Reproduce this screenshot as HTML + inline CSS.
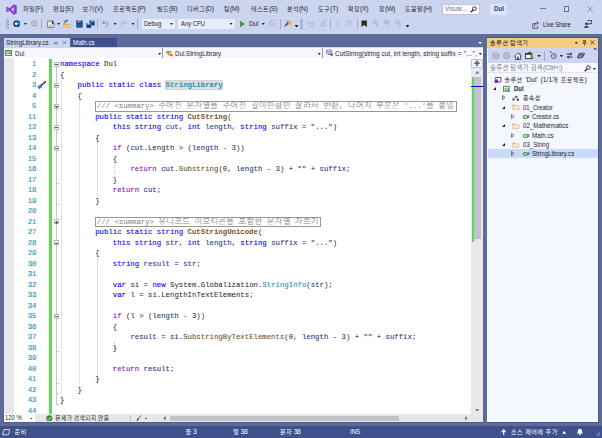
<!DOCTYPE html>
<html lang="ko">
<head>
<meta charset="utf-8">
<title>Dul - Microsoft Visual Studio</title>
<style>
*{box-sizing:border-box;margin:0;padding:0}
html,body{width:602px;height:438px;overflow:hidden;background:#5d6b99}
body{position:relative;font-family:"Liberation Sans","Noto Sans CJK KR",sans-serif;font-size:6.78px;color:#1e1e1e;-webkit-font-smoothing:antialiased;letter-spacing:-0.36px}
.a{position:absolute;white-space:nowrap}
.t{position:absolute;white-space:nowrap;line-height:10px;height:10px}
#top{left:0;top:0;width:602px;height:33.6px;background:#ccd5f0}
.menu{top:4.3px;font-size:6.89px;color:#303030}
.sep{position:absolute;width:0.8px;background:#a0abd3;top:19px;height:10px}
.dd{position:absolute;width:3.4px;height:2.2px;background:currentColor;color:#20203a;clip-path:polygon(0 0,100% 0,50% 100%)}
.grip{position:absolute;width:3px;height:9.5px;top:19px;background-image:linear-gradient(45deg,#7480ad 25%,transparent 25%,transparent 75%,#7480ad 75%),linear-gradient(45deg,#7480ad 25%,transparent 25%,transparent 75%,#7480ad 75%);background-size:2px 2px;background-position:0 0,1px 1px;opacity:.75}
.combo{position:absolute;top:19px;height:9.6px;background:#e9edfa}
/* editor */
#ed{left:3.5px;top:58px;width:479.5px;height:356px;background:#fff;overflow:hidden}
.ln{letter-spacing:0;position:absolute;left:14px;width:22.5px;text-align:right;height:10.5px;line-height:10.5px;font-family:"Liberation Mono",monospace;font-size:7.33px;color:#2b91af;-webkit-text-stroke:0.12px}
.cl{letter-spacing:0;position:absolute;left:60px;height:10.5px;line-height:10.5px;font-family:"Liberation Mono","NanumGothic",monospace;font-size:7.33px;color:#000;white-space:pre;color:#1a1a1a}
.xk,.xc,.xt,.xm,.xv,.xs{-webkit-text-stroke:0.1px}
.xk{color:#0000ff}.xc{color:#8f08c4}.xt{color:#2b91af}.xm{color:#74531f}.xv{color:#1f377f}.xs{color:#a31515}
.xb{font-weight:bold;color:#74531f;-webkit-text-stroke:0}
.xh{color:#2b91af;font-weight:bold;background:#dadfdf;box-shadow:inset 0 0 0 0.5px #c3c9c9;display:inline-block;height:10.3px;-webkit-text-stroke:0;padding:0 0.4px;margin:0 -0.4px}
.sum{letter-spacing:0;position:absolute;height:10.3px;border:0.9px solid #979797;background:#fff;font-family:"Liberation Mono","NanumGothic",monospace;font-size:7.33px;color:#808080;white-space:pre;line-height:8.3px;padding-left:0.8px;overflow:hidden}
.kc{font-family:"Liberation Mono","NanumGothic","Noto Sans CJK KR",monospace;font-size:8px;letter-spacing:0.41px}
.ko{font-size:88.5%;letter-spacing:0.46px}
.ob{position:absolute;left:53.7px;width:5px;height:5px;border:0.5px solid #bababa;background:#fff}
.ob i{position:absolute;left:0.7px;top:1.6px;width:2.6px;height:0.8px;background:#555}
.ob b{position:absolute;left:1.6px;top:0.7px;width:0.8px;height:2.6px;background:#555}
/* solution explorer */
.tr{letter-spacing:-0.25px;position:absolute;left:0;height:9.35px;line-height:9.35px;font-size:6.72px;color:#1e1e1e;white-space:nowrap}
.ex{position:absolute;width:0;height:0}
.exo{border-left:3.4px solid transparent;border-bottom:3.4px solid #222;margin-top:-0.6px}
.exc{border-top:2px solid transparent;border-bottom:2px solid transparent;border-left:2.4px solid #1e1e1e}
.sb{top:425.6px;left:0;width:602px;height:12.4px;background:#40508d}
.sbt{position:absolute;top:427.1px;height:10px;line-height:10px;color:#fff;font-size:6.89px;white-space:nowrap}
.n{letter-spacing:0!important;transform:scaleX(var(--s,.885));transform-origin:0 50%}
.cs2{letter-spacing:0.3px}
</style>
</head>
<body>
<!-- ======= title / menu / toolbar ======= -->
<div class="a" id="top"></div>
<svg class="a" style="left:5.5px;top:3.5px" width="11" height="11" viewBox="0 0 22 22"><path d="M15.6 0.6 L21.4 3 V19 L15.6 21.4 L7 13.4 L3 16.6 L0.6 15.4 V6.6 L3 5.4 L7 8.6 Z M15.8 6.6 L10.4 11 L15.8 15.4 Z M3.4 9 V13 L5.4 11 Z" fill="#8a3fd0" fill-rule="evenodd"/></svg>
<div class="t menu" style="left:23px"><span class="ko">파일</span>(F)</div>
<div class="t menu" style="left:53px"><span class="ko">편집</span>(E)</div>
<div class="t menu" style="left:82.5px"><span class="ko">보기</span>(V)</div>
<div class="t menu" style="left:113px"><span class="ko">프로젝트</span>(P)</div>
<div class="t menu" style="left:157px"><span class="ko">빌드</span>(B)</div>
<div class="t menu" style="left:187px"><span class="ko">디버그</span>(D)</div>
<div class="t menu" style="left:224px"><span class="ko">팀</span>(M)</div>
<div class="t menu" style="left:251px"><span class="ko">테스트</span>(S)</div>
<div class="t menu" style="left:287px"><span class="ko">분석</span>(N)</div>
<div class="t menu" style="left:318px"><span class="ko">도구</span>(T)</div>
<div class="t menu" style="left:348px"><span class="ko">확장</span>(X)</div>
<div class="t menu" style="left:379px"><span class="ko">창</span>(W)</div>
<div class="t menu" style="left:405px"><span class="ko">도움말</span>(H)</div>
<!-- search box -->
<div class="a" style="left:442px;top:4px;width:37.5px;height:10.5px;background:#fff;border:0.6px solid #b9c3e4"></div>
<div class="t n" style="left:445px;top:4.3px;font-size:7.01px;color:#717171">Visual...</div>
<svg class="a" style="left:469.5px;top:5.5px" width="7" height="7" viewBox="0 0 14 14"><circle cx="8.8" cy="5.2" r="3.6" fill="none" stroke="#2a2a2a" stroke-width="2"/><path d="M6.2 7.8 L1.4 12.6" stroke="#2a2a2a" stroke-width="2.8"/></svg>
<!-- solution name badge -->
<div class="a" style="left:489.5px;top:3.5px;width:17.5px;height:11.5px;background:#dfe5f7"></div>
<div class="t n" style="left:493.5px;top:4.3px;font-size:7.01px;font-weight:bold;color:#2a3f7d">Dul</div>
<!-- window buttons -->
<div class="a" style="left:540px;top:8.3px;width:5.6px;height:0.6px;background:#6a78ae"></div>
<div class="a" style="left:563.7px;top:6.2px;width:5.6px;height:5.6px;border:0.6px solid #5c6cab;background:#d5dcf3"></div>
<svg class="a" style="left:587px;top:6px" width="6.4" height="6.4" viewBox="0 0 12 12"><path d="M1 1 L11 11 M11 1 L1 11" stroke="#5c6cab" stroke-width="1.2" fill="none"/></svg>

<!-- toolbar row -->
<div class="grip" style="left:6px"></div>
<svg class="a" style="left:12.6px;top:20px" width="7.4" height="7.4" viewBox="0 0 16 16"><circle cx="8" cy="8" r="7.6" fill="#0f4a92"/><path d="M3 8 L8 3.4 V6.8 H12.8 V9.2 H8 V12.6 Z" fill="#fff"/></svg>
<div class="dd" style="left:23.8px;top:22.8px"></div>
<svg class="a" style="left:30.6px;top:20.4px" width="6.8" height="6.8" viewBox="0 0 16 16"><circle cx="8" cy="8" r="6.4" fill="#cdd1df" stroke="#9da3b7" stroke-width="2.6"/><path d="M12.4 8 L8 4 V6.6 H3.8 V9.4 H8 V12 Z" fill="#b9bece"/></svg>
<div class="sep" style="left:41px"></div>
<!-- new project -->
<svg class="a" style="left:45.5px;top:19.3px" width="9" height="9.4" viewBox="0 0 90 94"><path d="M16 22 H66 L80 36 V86 H16 Z" fill="#f6f6f8" stroke="#70758c" stroke-width="9"/><path d="M28 62 H66 M28 74 H60" stroke="#9a9fb4" stroke-width="7"/><rect x="58" y="18" width="16" height="34" fill="#3a3e55"/><circle cx="20" cy="20" r="15" fill="#e9a33c"/></svg>
<div class="dd" style="left:57px;top:22.8px"></div>
<!-- open -->
<svg class="a" style="left:63.4px;top:18.7px" width="8" height="9.3" viewBox="0 0 86 94"><path d="M4 90 V44 H34 L42 52 H80 V90 Z" fill="#d9a24c"/><path d="M4 90 L18 60 H86 L74 90 Z" fill="#efc98a"/><path d="M12 38 C10 18 22 8 38 10 V0 L54 16 L38 32 V22 C28 20 22 26 24 38 Z" fill="#1d4e97"/></svg>
<!-- save -->
<svg class="a" style="left:75.8px;top:19.8px" width="7" height="7.8" viewBox="0 0 14 16"><path d="M0.5 0.5 H11.5 L13.5 2.5 V15.5 H0.5 Z" fill="#123f7c"/><rect x="3.4" y="0.5" width="6.4" height="4.4" fill="#c9d6ee"/><rect x="6.6" y="1.2" width="2" height="3" fill="#123f7c"/><rect x="3" y="9" width="8" height="6.5" fill="#2a5aa2"/></svg>
<!-- save all -->
<svg class="a" style="left:86px;top:19.6px" width="8.8" height="8.6" viewBox="0 0 88 86"><path d="M36 2 H78 L86 10 V54 H36 Z" fill="#123f7c"/><rect x="52" y="2" width="22" height="16" fill="#c9d6ee"/><path d="M2 30 H44 L54 40 V84 H2 Z" fill="#123f7c" stroke="#ccd5f0" stroke-width="5"/><rect x="14" y="32" width="24" height="14" fill="#c9d6ee"/></svg>
<div class="sep" style="left:97.3px"></div>
<!-- undo -->
<svg class="a" style="left:102px;top:19.6px" width="7" height="8" viewBox="0 0 14 16"><path d="M2 2 V7 H7" fill="none" stroke="#7f88a8" stroke-width="1.8"/><path d="M2.6 6.4 C6 1.6 12 3 12 7.6 C12 11 9 13 6 14.6" fill="none" stroke="#7f88a8" stroke-width="1.8"/></svg>
<div class="dd" style="left:113.4px;top:22.8px"></div>
<!-- redo -->
<svg class="a" style="left:120px;top:19.6px" width="7" height="8" viewBox="0 0 14 16"><path d="M12 2 V7 H7" fill="none" stroke="#a9b1cb" stroke-width="1.6"/><path d="M11.4 6.4 C8 1.6 2 3 2 7.6 C2 11 5 13 8 14.6" fill="none" stroke="#a9b1cb" stroke-width="1.6"/></svg>
<div class="dd" style="left:131.4px;top:22.8px"></div>
<div class="sep" style="left:137.3px"></div>
<!-- combos -->
<div class="combo" style="left:141.8px;width:32.8px"></div>
<div class="t n" style="left:144.3px;top:18.8px;font-size:6.6px">Debug</div>
<div class="dd" style="left:169.8px;top:22.8px"></div>
<div class="combo" style="left:178px;width:56.8px"></div>
<div class="t n" style="left:180.5px;top:18.8px;font-size:6.6px">Any CPU</div>
<div class="dd" style="left:229.4px;top:22.8px"></div>
<!-- start -->
<svg class="a" style="left:240.2px;top:20.6px" width="4.7" height="6.1" viewBox="0 0 10 13"><path d="M0.5 0.5 L9.5 6.5 L0.5 12.5 Z" fill="#3f9f3f" stroke="#2e7d2e" stroke-width="1"/></svg>
<div class="t n" style="left:249px;top:18.8px;font-size:7.12px">Dul</div>
<div class="dd" style="left:261.6px;top:22.8px"></div>
<svg class="a" style="left:268.6px;top:20.4px" width="7" height="6.4" viewBox="0 0 14 13"><rect x="4" y="1" width="9" height="7" fill="#dfe3ef" stroke="#a9b0c8" stroke-width="1.4"/><rect x="1" y="5" width="7" height="6" fill="#c9cede" stroke="#a9b0c8" stroke-width="1.4"/></svg>
<div class="sep" style="left:279.5px"></div>
<!-- find in files -->
<svg class="a" style="left:283.6px;top:19.4px" width="8.6" height="8.4" viewBox="0 0 17 17"><path d="M4 2 H9 L10.5 4 H16 V12 H4 Z" fill="#e2a94f"/><path d="M6 6 H16 V12 H5 Z" fill="#edc27a"/><path d="M1 15.5 L2 11.5 L7.5 6 L10 8.5 L4.5 14 Z" fill="#2a63b5"/></svg>
<div class="dd" style="left:295.3px;top:26px;width:2.4px;height:1.5px;margin-left:0.1px"></div>
<div class="a" style="left:295.4px;top:24.5px;width:2.6px;height:0.8px;background:#1e1e1e"></div>
<div class="grip" style="left:300px"></div>
<!-- disabled indent icons -->
<svg class="a" style="left:307.4px;top:20.4px" width="7.6" height="7" viewBox="0 0 15 14"><path d="M2 1 V5 H5" fill="none" stroke="#a3abcb" stroke-width="1.4"/><rect x="4" y="6" width="10" height="6.5" fill="none" stroke="#a3abcb" stroke-width="1.4"/></svg>
<svg class="a" style="left:318.6px;top:20.4px" width="7.6" height="7" viewBox="0 0 15 14"><path d="M1 5 H5 V12 H1 M8 1 H14 M8 4 H14 V12.5 H8 Z" fill="none" stroke="#a3abcb" stroke-width="1.4"/></svg>
<div class="sep" style="left:329.5px"></div>
<svg class="a" style="left:334.6px;top:20.8px" width="6" height="6" viewBox="0 0 12 12"><path d="M2 2 H10 M5 6 H10 M2 10 H10" stroke="#a9b0ce" stroke-width="1.5"/></svg>
<svg class="a" style="left:345px;top:20.4px" width="7" height="7" viewBox="0 0 14 14"><path d="M1 2 H8 M4 6 H8 M1 10 H8 M11 1 V12 M9 4 L11 1 L13 4" fill="none" stroke="#a9b0ce" stroke-width="1.5"/></svg>
<div class="sep" style="left:356.5px"></div>
<!-- bookmark -->
<svg class="a" style="left:361.3px;top:19.8px" width="6.4" height="7.4" viewBox="0 0 13 15"><path d="M1 1 H12 V14 L6.5 10 L1 14 Z" fill="#2b2b2b"/></svg>
<svg class="a" style="left:372.3px;top:20.2px" width="6.4" height="7.2" viewBox="0 0 13 14"><path d="M3 1 H8 V8 L5.5 6 L3 8 Z M10 2 V12 M7 9.4 L10 12.4 L13 9.4" fill="none" stroke="#a3abcb" stroke-width="1.5"/></svg>
<svg class="a" style="left:383.3px;top:20.2px" width="7" height="7.2" viewBox="0 0 14 14"><path d="M3 1 H8 V8 L5.5 6 L3 8 Z M10.6 2 V12 M7.6 5 L10.6 2 L13.6 5" fill="none" stroke="#a3abcb" stroke-width="1.5"/></svg>
<svg class="a" style="left:394.6px;top:20.2px" width="6.6" height="7.2" viewBox="0 0 13 14"><path d="M2 1 H7 V8 L4.5 6 L2 8 Z M8 4 L12 12 M12 4 L8 12" fill="none" stroke="#a3abcb" stroke-width="1.4"/></svg>
<div class="dd" style="left:406.2px;top:26px;width:2.4px;height:1.5px;margin-left:0.1px"></div>
<div class="a" style="left:406.3px;top:24.5px;width:2.6px;height:0.8px;background:#1e1e1e"></div>
<!-- live share -->
<svg class="a" style="left:532px;top:21px" width="7.4" height="8" viewBox="0 0 74 80"><path d="M40 26 H8 V74 H58 V50" fill="none" stroke="#3a3d52" stroke-width="8"/><path d="M26 58 C26 30 40 18 62 18 M46 2 L66 18 L46 36" fill="none" stroke="#3a3d52" stroke-width="8"/></svg>
<div class="t n" style="left:543px;top:19.9px;font-size:6.55px">Live Share</div>
<svg class="a" style="left:583.8px;top:20.2px" width="8.4" height="8" viewBox="0 0 84 80"><path d="M34 6 H78 V36 H56 L46 46 V36 H40" fill="none" stroke="#2b2e44" stroke-width="9"/><circle cx="24" cy="38" r="13" fill="#2b2e44"/><path d="M2 78 C2 50 46 50 46 78 Z" fill="#2b2e44"/></svg>

<!-- ======= document well ======= -->
<div class="a" style="left:3.5px;top:38.3px;width:66.7px;height:9px;background:#ccd5f0"></div>
<div class="t n" style="left:5.6px;top:37.9px;font-size:7.01px;color:#1e1e1e">StringLibrary.cs</div>
<svg class="a" style="left:53px;top:40.6px" width="5" height="4.4" viewBox="0 0 10 9"><path d="M0 4.5 H4 M4 2 V7 M4.6 3 H9 M4.6 6 H9 M9 2.4 V6.6" stroke="#4a5070" stroke-width="1" fill="none"/></svg>
<svg class="a" style="left:62.2px;top:40.2px" width="5" height="5" viewBox="0 0 10 10"><path d="M1.4 1.4 L8.6 8.6 M8.6 1.4 L1.4 8.6" stroke="#45485c" stroke-width="1.1" fill="none"/></svg>
<div class="a" style="left:70.5px;top:38.3px;width:46px;height:8.7px;background:#40508d"></div>
<div class="t n" style="left:72.7px;top:37.9px;font-size:7.01px;color:#fff">Math.cs</div>
<div class="dd" style="left:478.2px;top:41.8px;color:#fff;width:4px;height:2.4px"></div>
<!-- nav bar -->
<div class="a" style="left:3.5px;top:47px;width:479.5px;height:11.5px;background:#f6f8fe;border-top:1px solid #ccd5f0;border-bottom:0.8px solid #ccd5f0"></div>
<svg class="a" style="left:5px;top:50px" width="7" height="6" viewBox="0 0 14 12"><rect x="1" y="1" width="12" height="10" fill="#f1f7ee" stroke="#4f9a3f" stroke-width="2"/><text x="7" y="8.8" font-size="7.4" font-weight="bold" text-anchor="middle" font-family="Liberation Sans, sans-serif" fill="#2b2b2b" letter-spacing="-0.4">C#</text></svg>
<div class="t n" style="left:14.5px;top:48.8px;font-size:7.01px">Dul</div>
<div class="dd" style="left:158px;top:52.8px"></div>
<div class="a" style="left:162.3px;top:48px;width:0.9px;height:10px;background:#8e9bc6"></div>
<svg class="a" style="left:166.4px;top:49.8px" width="7" height="7" viewBox="0 0 14 14"><path d="M1 3 H6 V6 H1 Z M8 1.6 L10.4 4 L8 6.4 L5.6 4 Z M8 8 H13 V12 H8 Z M4 6 V10 H8" fill="#d6872a" stroke="#b76a14" stroke-width="0.8"/></svg>
<div class="t n" style="left:175px;top:48.8px;font-size:7.01px">Dul.StringLibrary</div>
<div class="dd" style="left:317.6px;top:52.8px"></div>
<div class="a" style="left:322.3px;top:48px;width:0.9px;height:10px;background:#8e9bc6"></div>
<svg class="a" style="left:325.6px;top:49.4px" width="7.4" height="7.4" viewBox="0 0 15 15"><path d="M6 1 L11 3.6 V9 L6 11.6 L1 9 V3.6 Z" fill="#f2e9fa" stroke="#7a3fb0" stroke-width="1.4"/><path d="M1 3.6 L6 6.2 L11 3.6 M6 6.2 V11.6" fill="none" stroke="#7a3fb0" stroke-width="1.2"/><circle cx="11.4" cy="11.4" r="2.6" fill="#55596b"/></svg>
<div class="t n" style="left:334.8px;top:48.8px;font-size:7.21px;color:#2b2b2b;--s:.893">CutString(string cut, int length, string suffix<span class="cs2"> = "...", </span></div>
<div class="dd" style="left:478.6px;top:52.8px"></div>

<!-- ======= editor ======= -->
<div class="a" id="ed">
 <div class="a" style="left:0;top:0;width:10.2px;height:357px;background:#e6e7e8"></div>
</div>
<div class="a" style="left:49px;top:58.7px;width:2.9px;height:355px;background:#5bd75b"></div>
<!-- outline lines -->
<div class="a" style="left:56px;top:66px;width:0.6px;height:337.6px;background:#c6c6c6"></div>
<div class="a" style="left:61.4px;top:80px;width:0;height:325px;border-left:0.7px dotted #cfcfcf"></div>
<div class="a" style="left:79.2px;top:101px;width:0;height:293px;border-left:0.7px dotted #cfcfcf"></div>
<div class="a" style="left:96.8px;top:133px;width:0;height:63px;border-left:0.7px dotted #cfcfcf"></div>
<div class="a" style="left:96.8px;top:258px;width:0;height:126px;border-left:0.7px dotted #cfcfcf"></div>
<div class="a" style="left:114.4px;top:164px;width:0;height:10px;border-left:0.7px dotted #cfcfcf"></div>
<div class="a" style="left:114.4px;top:342px;width:0;height:10px;border-left:0.7px dotted #cfcfcf"></div>
<div class="ob" style="top:61.90px"><i></i></div>
<div class="ob" style="top:82.90px"><i></i></div>
<div class="ob" style="top:103.90px"><i></i><b></b></div>
<div class="ob" style="top:124.90px"><i></i></div>
<div class="ob" style="top:145.90px"><i></i></div>
<div class="ob" style="top:219.40px"><i></i><b></b></div>
<div class="ob" style="top:240.40px"><i></i></div>
<div class="ob" style="top:313.90px"><i></i></div>
<div class="a" style="left:56px;top:183.10px;width:3px;height:0.6px;background:#c6c6c6"></div>
<div class="a" style="left:56px;top:204.10px;width:3px;height:0.6px;background:#c6c6c6"></div>
<div class="a" style="left:56px;top:351.10px;width:3px;height:0.6px;background:#c6c6c6"></div>
<div class="a" style="left:56px;top:382.60px;width:3px;height:0.6px;background:#c6c6c6"></div>
<div class="a" style="left:56px;top:393.10px;width:3px;height:0.6px;background:#c6c6c6"></div>
<div class="a" style="left:56px;top:403.60px;width:3px;height:0.6px;background:#c6c6c6"></div>
<!-- screwdriver/brush quick action on line 3 -->
<svg class="a" style="left:37px;top:81px" width="9.4" height="8.6" viewBox="0 0 94 86"><path d="M88 6 L40 46" stroke="#2b2b2b" stroke-width="13" stroke-linecap="round"/><path d="M34 33 L54 55 L24 83 L3 60 Z" fill="#2f74c8"/></svg>
<div class="ln" style="top:59.15px">1</div>
<div class="cl" style="top:59.15px"><span class="xk">namespace</span> Dul</div>
<div class="ln" style="top:69.65px">2</div>
<div class="cl" style="top:69.65px">{</div>
<div class="ln" style="top:80.15px">3</div>
<div class="cl" style="top:80.15px">    <span class="xk">public static class</span> <span class="xh">StringLibrary</span></div>
<div class="ln" style="top:90.65px">4</div>
<div class="cl" style="top:90.65px">    {</div>
<div class="ln" style="top:101.15px">5</div>
<div class="sum" style="top:101.35px;left:95px;width:361.7px">/// &lt;summary&gt; <span class=kc>주어진</span> <span class=kc>문자열을</span> <span class=kc>주어진</span> <span class=kc>길이만큼만</span> <span class=kc>잘라서</span> <span class=kc>반환</span>, <span class=kc>나머지</span> <span class=kc>부분은</span> '...'<span class=kc>을</span> <span class=kc>붙임</span></div>
<div class="ln" style="top:111.65px">11</div>
<div class="cl" style="top:111.65px">        <span class="xk">public static string</span> <span class="xb">CutString</span>(</div>
<div class="ln" style="top:122.15px">12</div>
<div class="cl" style="top:122.15px">            <span class="xk">this string</span> <span class="xv">cut</span>, <span class="xk">int</span> <span class="xv">length</span>, <span class="xk">string</span> <span class="xv">suffix</span> = <span class="xs">"..."</span>)</div>
<div class="ln" style="top:132.65px">13</div>
<div class="cl" style="top:132.65px">        {</div>
<div class="ln" style="top:143.15px">14</div>
<div class="cl" style="top:143.15px">            <span class="xc">if</span> (<span class="xv">cut</span>.Length &gt; (<span class="xv">length</span> - 3))</div>
<div class="ln" style="top:153.65px">15</div>
<div class="cl" style="top:153.65px">            {</div>
<div class="ln" style="top:164.15px">16</div>
<div class="cl" style="top:164.15px">                <span class="xc">return</span> <span class="xv">cut</span>.<span class="xm">Substring</span>(0, <span class="xv">length</span> - 3) + <span class="xs">""</span> + <span class="xv">suffix</span>;</div>
<div class="ln" style="top:174.65px">17</div>
<div class="cl" style="top:174.65px">            }</div>
<div class="ln" style="top:185.15px">18</div>
<div class="cl" style="top:185.15px">            <span class="xc">return</span> <span class="xv">cut</span>;</div>
<div class="ln" style="top:195.65px">19</div>
<div class="cl" style="top:195.65px">        }</div>
<div class="ln" style="top:206.15px">20</div>
<div class="ln" style="top:216.65px">21</div>
<div class="sum" style="top:216.85px;left:95px;width:225.7px">/// &lt;summary&gt; <span class=kc>유니코드</span> <span class=kc>이모티콘을</span> <span class=kc>포함한</span> <span class=kc>문자열</span> <span class=kc>자르기</span></div>
<div class="ln" style="top:227.15px">27</div>
<div class="cl" style="top:227.15px">        <span class="xk">public static string</span> <span class="xb">CutStringUnicode</span>(</div>
<div class="ln" style="top:237.65px">28</div>
<div class="cl" style="top:237.65px">            <span class="xk">this string</span> <span class="xv">str</span>, <span class="xk">int</span> <span class="xv">length</span>, <span class="xk">string</span> <span class="xv">suffix</span> = <span class="xs">"..."</span>)</div>
<div class="ln" style="top:248.15px">29</div>
<div class="cl" style="top:248.15px">        {</div>
<div class="ln" style="top:258.65px">30</div>
<div class="cl" style="top:258.65px">            <span class="xk">string</span> <span class="xv">result</span> = <span class="xv">str</span>;</div>
<div class="ln" style="top:269.15px">31</div>
<div class="ln" style="top:279.65px">32</div>
<div class="cl" style="top:279.65px">            <span class="xk">var</span> <span class="xv">si</span> = <span class="xk">new</span> System.Globalization.<span class="xt">StringInfo</span>(<span class="xv">str</span>);</div>
<div class="ln" style="top:290.15px">33</div>
<div class="cl" style="top:290.15px">            <span class="xk">var</span> <span class="xv">l</span> = <span class="xv">si</span>.LengthInTextElements;</div>
<div class="ln" style="top:300.65px">34</div>
<div class="ln" style="top:311.15px">35</div>
<div class="cl" style="top:311.15px">            <span class="xc">if</span> (<span class="xv">l</span> &gt; (<span class="xv">length</span> - 3))</div>
<div class="ln" style="top:321.65px">36</div>
<div class="cl" style="top:321.65px">            {</div>
<div class="ln" style="top:332.15px">37</div>
<div class="cl" style="top:332.15px">                <span class="xv">result</span> = <span class="xv">si</span>.<span class="xm">SubstringByTextElements</span>(0, <span class="xv">length</span> - 3) + <span class="xs">""</span> + <span class="xv">suffix</span>;</div>
<div class="ln" style="top:342.65px">38</div>
<div class="cl" style="top:342.65px">            }</div>
<div class="ln" style="top:353.15px">39</div>
<div class="ln" style="top:363.65px">40</div>
<div class="cl" style="top:363.65px">            <span class="xc">return</span> <span class="xv">result</span>;</div>
<div class="ln" style="top:374.15px">41</div>
<div class="cl" style="top:374.15px">        }</div>
<div class="ln" style="top:384.65px">42</div>
<div class="cl" style="top:384.65px">    }</div>
<div class="ln" style="top:395.15px">43</div>
<div class="cl" style="top:395.15px">}</div>
<div class="ln" style="top:405.65px">44</div>
<!-- vertical scrollbar -->
<div class="a" style="left:471px;top:59px;width:12px;height:355px;background:#e8e8ec"></div>
<div class="a" style="left:471px;top:58.8px;width:12px;height:8.8px;background:#f2f5fe;border:0.8px solid #b9c4e6"></div>
<svg class="a" style="left:474px;top:60.4px" width="6" height="6.4" viewBox="0 0 60 64"><path d="M30 0 L42 14 H37 V26 H48 V20 L60 32 L48 44 V38 H37 V50 H42 L30 64 L18 50 H23 V38 H12 V44 L0 32 L12 20 V26 H23 V14 H18 Z" fill="#4d4f60"/></svg>

<svg class="a" style="left:474.8px;top:71.2px" width="4.6" height="2.8" viewBox="0 0 46 28"><path d="M0 28 L23 0 L46 28 Z" fill="#7e8192"/></svg>
<div class="a" style="left:474px;top:77px;width:6.8px;height:161.6px;background:#c2c3c9"></div>
<div class="a" style="left:471.8px;top:77px;width:2px;height:165px;background:#5bd75b"></div>
<div class="a" style="left:471px;top:86px;width:12px;height:0.9px;background:#0000cd"></div>
<svg class="a" style="left:474.8px;top:408.6px" width="4.6" height="2.8" viewBox="0 0 46 28"><path d="M0 0 L23 28 L46 0 Z" fill="#7e8192"/></svg>
<!-- editor bottom bar -->
<div class="a" style="left:3.2px;top:414px;width:480.2px;height:9px;background:#4c5b93"></div><div class="a" style="left:3.5px;top:414px;width:479.5px;height:8.2px;background:#fdfdff"></div><div class="a" style="left:3.5px;top:414px;width:479.5px;height:7.6px;background:#e8e8ec"></div>
<div class="a" style="left:3.5px;top:414.2px;width:31px;height:7.6px;background:#fff"></div>
<div class="t n" style="left:5px;top:413.3px;font-size:6.67px">120 %</div>
<div class="dd" style="left:30px;top:417.6px;width:2.9px;height:1.9px"></div>
<svg class="a" style="left:46px;top:414.8px" width="6.6" height="6.6" viewBox="0 0 14 14"><circle cx="7" cy="7" r="6.4" fill="#2e8b2e"/><path d="M3.6 7.2 L6.2 9.8 L10.6 4.6" stroke="#fff" stroke-width="1.8" fill="none"/></svg>
<div class="t" style="left:55.3px;top:413.3px;font-size:6.44px"><span class="ko">문제가</span> <span class="ko">검색되지</span> <span class="ko">않음</span></div>
<div class="a" style="left:129.5px;top:415.4px;width:0.6px;height:6px;background:#b5b7c4"></div>
<svg class="a" style="left:136px;top:415px" width="6" height="6.4" viewBox="0 0 12 13"><path d="M10.5 1 L5 7" stroke="#2b2b2b" stroke-width="1.4"/><path d="M5.2 6.6 L2 11.6" stroke="#2b2b2b" stroke-width="2.2"/></svg>
<div class="dd" style="left:144.6px;top:417.6px;width:2.9px;height:1.9px"></div>
<svg class="a" style="left:163.2px;top:416px" width="2.8" height="4.6" viewBox="0 0 28 46"><path d="M28 0 L0 23 L28 46 Z" fill="#7e8192"/></svg>
<div class="a" style="left:169.5px;top:416px;width:229px;height:5px;background:#c2c3c9"></div>
<svg class="a" style="left:465.2px;top:416px" width="2.8" height="4.6" viewBox="0 0 28 46"><path d="M0 0 L28 23 L0 46 Z" fill="#7e8192"/></svg>

<!-- ======= solution explorer ======= -->
<div class="a" style="left:486.6px;top:36.6px;width:112.4px;height:386.2px;background:#47568f"></div>
<div class="a" style="left:487.3px;top:37.6px;width:111px;height:384.5px;background:#fdfdff"></div><div class="a" style="left:488.2px;top:37.6px;width:109.4px;height:383.8px;background:#f5f7ff"></div>
<div class="a" style="left:487.3px;top:37.6px;width:111px;height:10.2px;background:#f5cc84"></div>
<div class="t" style="left:489.8px;top:37.8px;font-size:7.05px;color:#1e1e1e"><span class="ko">솔루션</span> <span class="ko">탐색기</span></div>
<div class="dd" style="left:574.6px;top:42px;color:#4a3e22"></div>
<svg class="a" style="left:581.6px;top:39.8px" width="5" height="6.4" viewBox="0 0 10 13"><path d="M2 1 H8 M3 1 V6.4 M7 1 V6.4 M1 6.6 H9 M5 6.6 V12" stroke="#4a3e22" stroke-width="1.3" fill="none"/><rect x="5" y="1" width="2" height="5.4" fill="#4a3e22"/></svg>
<svg class="a" style="left:590.4px;top:40.4px" width="4.8" height="4.8" viewBox="0 0 10 10"><path d="M1 1 L9 9 M9 1 L1 9" stroke="#3a3020" stroke-width="1.8" fill="none"/></svg>
<!-- toolbar -->
<div class="a" style="left:487.5px;top:47.8px;width:110.7px;height:15.4px;background:#ccd5f0"></div>
<svg class="a" style="left:492px;top:52.4px" width="7.2" height="7.2" viewBox="0 0 14 14"><circle cx="7" cy="7" r="5.6" fill="#d3d7e5" stroke="#9da3b7" stroke-width="2.2"/><path d="M3 7 L7 3 V5.6 H11 V8.4 H7 V11 Z" fill="#a9afc3"/></svg>
<svg class="a" style="left:503px;top:52.4px" width="7.2" height="7.2" viewBox="0 0 14 14"><circle cx="7" cy="7" r="5.6" fill="#d3d7e5" stroke="#9da3b7" stroke-width="2.2"/><path d="M11 7 L7 3 V5.6 H3 V8.4 H7 V11 Z" fill="#a9afc3"/></svg>
<svg class="a" style="left:513.6px;top:51.6px" width="8" height="8" viewBox="0 0 16 16"><path d="M8 1.5 L15 8.5 H13 V15 H3 V8.5 H1 Z" fill="#f4f4f6" stroke="#2b2e44" stroke-width="1.5"/><rect x="6.4" y="9.6" width="3.2" height="5.4" fill="#2b2e44"/><rect x="11" y="2" width="1.8" height="3.4" fill="#2b2e44"/></svg>
<svg class="a" style="left:525.2px;top:50.8px" width="8.8" height="8.8" viewBox="0 0 88 88"><rect x="58" y="8" width="24" height="64" fill="#eaa93e"/><rect x="6" y="24" width="56" height="52" fill="#fbfbfd" stroke="#2b2e44" stroke-width="9"/><rect x="6" y="22" width="56" height="16" fill="#2b2e44"/><path d="M28 14 L46 2 V10 H62 V20 H46 V26 Z" fill="#2a63b5"/><path d="M66 66 H86 L76 86 Z" fill="#2a63b5"/></svg>
<div class="dd" style="left:537.4px;top:55px"></div>
<div class="sep" style="left:543.6px;top:50.6px;height:10px"></div>
<svg class="a" style="left:549.4px;top:51px" width="8.6" height="8.6" viewBox="0 0 17 17"><circle cx="9.5" cy="10" r="5" fill="none" stroke="#3b3e55" stroke-width="1.5"/><path d="M9.5 7 V10 H12" fill="none" stroke="#3b3e55" stroke-width="1.3"/><path d="M1 1 H6 L3.5 4 Z" fill="#3b3e55"/></svg>
<div class="dd" style="left:559.6px;top:55px"></div>
<svg class="a" style="left:566px;top:52px" width="7" height="7" viewBox="0 0 14 14"><path d="M1 4 H10 M13 10 H4" fill="none" stroke="#2b2e44" stroke-width="2"/><path d="M8.4 0.6 L12.6 4 L8.4 7.4 Z M5.6 6.6 L1.4 10 L5.6 13.4 Z" fill="#2b2e44"/></svg>
<svg class="a" style="left:577.4px;top:52px" width="8" height="7" viewBox="0 0 16 14"><path d="M5 2.4 H15 L12.6 8.4 H2.6 Z" fill="#b4bace" stroke="#3b3e55" stroke-width="1.7"/><path d="M3 5.6 H12.6 L10.4 11.6 H0.8 Z" fill="#8d93ab" stroke="#3b3e55" stroke-width="1.7"/></svg>
<div class="t" style="left:593.4px;top:46.4px;font-size:6.78px;color:#1e1e1e;font-weight:bold">"</div>
<!-- search -->
<div class="a" style="left:487.5px;top:63.2px;width:110.7px;height:10.2px;background:#f7f9ff;border-bottom:0.6px solid #dfe4f4"></div>
<div class="t" style="left:490px;top:63.4px;font-size:7.1px;color:#7a7d8c"><span class="ko">솔루션</span> <span class="ko">탐색기</span> <span class="ko">검색</span>(Ctrl+;)</div>
<svg class="a" style="left:583.6px;top:65px" width="7" height="7" viewBox="0 0 14 14"><circle cx="8.8" cy="5.2" r="3.6" fill="none" stroke="#2b2e44" stroke-width="2"/><path d="M6.2 7.8 L1.4 12.6" stroke="#2b2e44" stroke-width="2.8"/></svg>
<div class="dd" style="left:593px;top:68px;width:2.9px;height:1.9px"></div>
<!-- tree -->
<div class="a" style="left:487.5px;top:149.2px;width:110.7px;height:9.3px;background:#c9d9fb"></div>
<div id="tree" class="a" style="left:487.5px;top:74.6px;width:110.7px;height:340px">
 <!-- row 0 -->
 <svg class="a" style="left:6px;top:1.2px" width="8" height="7.4" viewBox="0 0 16 15"><path d="M3 3 H14 V12 H8" fill="none" stroke="#2b2e44" stroke-width="1.6"/><path d="M3 3 V6" stroke="#2b2e44" stroke-width="1.6"/><rect x="1" y="7" width="7" height="7" fill="#7a2fb5"/></svg>
 <div class="tr" style="left:17.1px;top:0;word-spacing:0.9px;letter-spacing:0px"><span class="ko">솔루션</span> 'Dul' (1/1<span class="ko">개</span> <span class="ko">프로젝트</span>)</div>
 <!-- row 1 -->
 <div class="ex exo" style="left:5.2px;top:12.8px"></div>
 <svg class="a" style="left:15.2px;top:11.2px" width="7.4" height="6.4" viewBox="0 0 14 12"><rect x="1" y="1" width="12" height="10" fill="#f1f7ee" stroke="#4f9a3f" stroke-width="2"/><text x="7" y="8.8" font-size="7.4" font-weight="bold" text-anchor="middle" font-family="Liberation Sans, sans-serif" fill="#2b2b2b" letter-spacing="-0.4">C#</text></svg>
 <div class="tr n" style="left:26.2px;top:9.35px;font-weight:bold">Dul</div>
 <!-- row 2 -->
 <svg class="a" style="left:14.7px;top:20.8px" width="3.6" height="5" viewBox="0 0 7 10"><path d="M1 1 L6 5 L1 9 Z" fill="none" stroke="#333" stroke-width="1.3"/></svg>
 <svg class="a" style="left:24.9px;top:20.2px" width="7.4" height="6.6" viewBox="0 0 15 13"><rect x="1" y="7" width="4" height="4" fill="#3b3e55"/><rect x="7" y="1.6" width="3.6" height="3.6" fill="#3b3e55"/><rect x="10" y="7.6" width="4" height="4" fill="#3b3e55"/><path d="M3 7 L8.6 4 L12 8" fill="none" stroke="#3b3e55" stroke-width="1"/></svg>
 <div class="tr" style="left:35.4px;top:18.7px"><span class="ko">종속성</span></div>
 <!-- row 3 -->
 <div class="ex exo" style="left:14.5px;top:31.5px"></div>
 <svg class="a" style="left:24.9px;top:29.8px" width="7.6" height="6" viewBox="0 0 15 12"><path d="M1 1.6 H6 L7.4 3.4 H14 V11 H1 Z" fill="#e3c48f" stroke="#d6b272" stroke-width="0.7"/><rect x="2.4" y="4.8" width="10.2" height="4.4" fill="#fbf4e4"/></svg>
 <div class="tr n" style="left:35.4px;top:28.05px">01_Creator</div>
 <!-- row 4 -->
 <svg class="a" style="left:23.9px;top:39.5px" width="3.6" height="5" viewBox="0 0 7 10"><path d="M1 1 L6 5 L1 9 Z" fill="none" stroke="#333" stroke-width="1.3"/></svg>
 <div class="tr cs" style="left:35.3px;top:37.4px;font-size:6.2px;font-weight:bold;color:#2a8a2a;-webkit-text-stroke:0.2px #2a8a2a;letter-spacing:-0.5px">C<span style="font-size:4.4px;position:relative;top:-1px">#</span></div>
 <div class="tr n" style="left:44.4px;top:37.4px">Creator.cs</div>
 <!-- row 5 -->
 <div class="ex exo" style="left:14.5px;top:50.2px"></div>
 <svg class="a" style="left:24.9px;top:48.5px" width="7.6" height="6" viewBox="0 0 15 12"><path d="M1 1.6 H6 L7.4 3.4 H14 V11 H1 Z" fill="#e3c48f" stroke="#d6b272" stroke-width="0.7"/><rect x="2.4" y="4.8" width="10.2" height="4.4" fill="#fbf4e4"/></svg>
 <div class="tr n" style="left:35.4px;top:46.75px;--s:0.92">02_Mathematics</div>
 <!-- row 6 -->
 <svg class="a" style="left:23.9px;top:58.2px" width="3.6" height="5" viewBox="0 0 7 10"><path d="M1 1 L6 5 L1 9 Z" fill="none" stroke="#333" stroke-width="1.3"/></svg>
 <div class="tr cs" style="left:35.3px;top:56.1px;font-size:6.2px;font-weight:bold;color:#2a8a2a;-webkit-text-stroke:0.2px #2a8a2a;letter-spacing:-0.5px">C<span style="font-size:4.4px;position:relative;top:-1px">#</span></div>
 <div class="tr n" style="left:44.4px;top:56.1px;--s:0.915">Math.cs</div>
 <!-- row 7 -->
 <div class="ex exo" style="left:14.5px;top:68.9px"></div>
 <svg class="a" style="left:24.9px;top:67.2px" width="7.6" height="6" viewBox="0 0 15 12"><path d="M1 1.6 H6 L7.4 3.4 H14 V11 H1 Z" fill="#e3c48f" stroke="#d6b272" stroke-width="0.7"/><rect x="2.4" y="4.8" width="10.2" height="4.4" fill="#fbf4e4"/></svg>
 <div class="tr n" style="left:35.4px;top:65.45px;--s:0.906">03_String</div>
 <!-- row 8 -->
 <svg class="a" style="left:23.9px;top:76.9px" width="3.6" height="5" viewBox="0 0 7 10"><path d="M1 1 L6 5 L1 9 Z" fill="none" stroke="#333" stroke-width="1.3"/></svg>
 <div class="tr cs" style="left:35.3px;top:74.8px;font-size:6.2px;font-weight:bold;color:#2a8a2a;-webkit-text-stroke:0.2px #2a8a2a;letter-spacing:-0.5px">C<span style="font-size:4.4px;position:relative;top:-1px">#</span></div>
 <div class="tr n" style="left:44.4px;top:74.8px;--s:0.915">StringLibrary.cs</div>
</div>

<!-- ======= status bar ======= -->
<div class="a sb"></div>
<svg class="a" style="left:2px;top:429.4px" width="8.4" height="6.4" viewBox="0 0 17 13"><path d="M4 1.2 H16 L13 11.8 H1 Z" fill="none" stroke="#fff" stroke-width="1.6"/></svg>
<div class="sbt" style="left:14.6px"><span class="ko">준비</span></div>
<div class="sbt" style="left:185.4px"><span class="ko">줄</span> 3</div>
<div class="sbt" style="left:233px"><span class="ko">열</span> 38</div>
<div class="sbt" style="left:280px"><span class="ko">문자</span> 38</div>
<div class="sbt n" style="left:349.6px">INS</div>
<svg class="a" style="left:501px;top:428.6px" width="5.4" height="6.6" viewBox="0 0 11 13"><path d="M5.5 12.5 V2 M1.2 6 L5.5 1.6 L9.8 6" fill="none" stroke="#fff" stroke-width="2.2"/></svg>
<div class="sbt" style="left:511px;word-spacing:0.6px"><span class="ko">소스</span> <span class="ko">제어에</span> <span class="ko">추가</span></div>
<svg class="a" style="left:561.6px;top:431.3px" width="4.6" height="2.8" viewBox="0 0 40 26"><path d="M0 26 L20 0 L40 26 Z" fill="#fff"/></svg>
<svg class="a" style="left:575.6px;top:428.2px" width="7.8" height="7.6" viewBox="0 0 16 15"><path d="M8 1 C4.6 1 3.6 4 3.6 7 C3.6 9 2.6 10 1.4 11 H14.6 C13.4 10 12.4 9 12.4 7 C12.4 4 11.4 1 8 1 Z" fill="#fff"/><circle cx="8" cy="12.8" r="1.6" fill="#fff"/></svg>
<svg class="a" style="left:595.4px;top:430.6px" width="5" height="5.6" viewBox="0 0 10 11"><path d="M10 0 V11 H0 Z" fill="#6d79a9"/></svg>
</body>
</html>
